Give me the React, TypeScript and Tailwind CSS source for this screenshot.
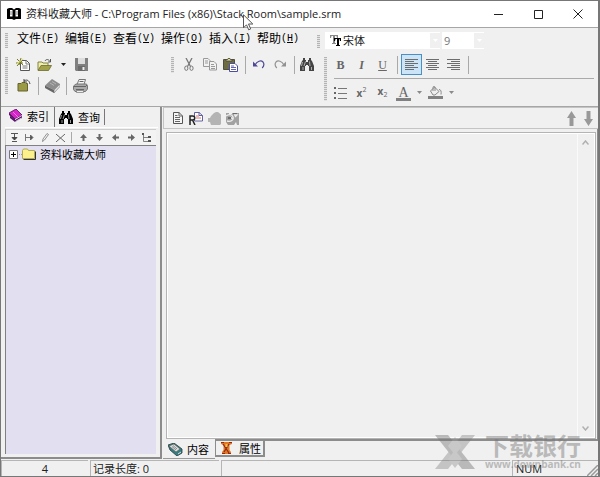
import React from 'react';

const Grip = ({ className = '' }: { className?: string }) => (
  <span className={`w-[3px] shrink-0 bg-[repeating-linear-gradient(to_bottom,#b4b4b4_0_1px,#e4e4e4_1px_2px)] ${className}`} />
);

const Sep = () => <span className="h-[18px] w-px shrink-0 bg-[#a9a9a9]" />;

const ToolButton = ({ label, active, className = '', children }: { label: string, active?: boolean, className?: string, children: React.ReactNode }) => (
  <button
    type="button"
    aria-label={label}
    className={`flex h-[21px] w-[21px] shrink-0 items-center justify-center ${active ? 'border border-[#4a90c4] bg-[#cce4f7]' : ''} ${className}`}
  >
    {children}
  </button>
);

const Caret = ({ color = '#8a8a8a' }: { color?: string }) => (
  <svg width="5" height="3" viewBox="0 0 5 3"><path d="M0 0h5L2.500 3z" fill={color} /></svg>
);

const NewIcon = () => (
  <svg width="15" height="15" viewBox="0 0 15 15">
    <path d="M5.500 3.500h5l3 3v7h-9V7z" fill="#fff" stroke="#555" />
    <path d="M10 3.500V7h3.500M6.500 9h5M6.500 11h5" fill="none" stroke="#777" />
    <path d="M1 2l6 6M0 6h7M5 1L3 8M1 9l6-7" stroke="#77791f" />
    <path d="M1 7l6-5" stroke="#eceb7d" />
  </svg>
);

const OpenIcon = () => (
  <svg width="15" height="14" viewBox="0 0 15 14">
    <path d="M1 12V4h4l1 1h5v3" fill="#efeeb0" stroke="#84843c" />
    <path d="M1 12.500l3-5h10.500l-3 5z" fill="#a3a24a" stroke="#6c6b2c" strokeWidth=".8" />
    <path d="M8 3c1-2 3.500-2 5 .5M13.500 1v3H11" fill="none" stroke="#555" />
  </svg>
);

const SaveIcon = () => (
  <svg width="13" height="13" viewBox="0 0 13 13">
    <path d="M0 0h13v13H1l-1-1z" fill="#808080" />
    <path d="M3 0h7v6H3z" fill="#dedede" />
    <path d="M3 8h7v5H3z" fill="#6b6b6b" />
    <path d="M7.500 9h2v3h-2z" fill="#eee" />
  </svg>
);

const CloseFolderIcon = () => (
  <svg width="14" height="13" viewBox="0 0 14 13">
    <path d="M1 12V4.500h3l1-1h3l1 1h1.500V12z" fill="#9b9a44" stroke="#64632c" />
    <path d="M7 2c2-1.500 5-1.500 6 3M7 0v3h3" fill="none" stroke="#444" />
  </svg>
);

const BookIcon = () => (
  <svg width="15" height="14" viewBox="0 0 15 14">
    <path d="M0 6.500L7 0l8 5-6 6z" fill="#8d8d8d" />
    <path d="M0 6.500v2.500l9 5v-3z" fill="#666" />
    <path d="M9 11l6-6v2.500L9 14z" fill="#ddd" stroke="#777" strokeWidth=".6" />
    <path d="M5 4l4 2.500M7 2.500l4 2.500" stroke="#b5b5b5" />
  </svg>
);

const PrintIcon = () => (
  <svg width="15" height="14" viewBox="0 0 15 14">
    <path d="M4 5.500L6 .5h6.500L11 5.500" fill="#f5f5f5" stroke="#777" />
    <path d="M.5 7l2.500-2h10.500l1 2v3l-2 2.500H2l-1.500-2z" fill="#aaa" stroke="#777" />
    <path d="M1 7.500h11M3 10.500h8M6.500 2.500h4M12 8l2-2" stroke="#666" />
    <path d="M3.500 11.500h7v2h-7z" fill="#eee" stroke="#777" strokeWidth=".7" />
  </svg>
);

const CutIcon = () => (
  <svg width="10" height="13" viewBox="0 0 10 13" fill="none" stroke="#777">
    <path d="M2 0l4.500 8.500M8 0L3.500 8.500" strokeWidth="1.300" />
    <ellipse cx="2.300" cy="10.200" rx="1.600" ry="2.200" />
    <ellipse cx="7.500" cy="10.200" rx="1.600" ry="2.200" />
  </svg>
);

const CopyIcon = () => (
  <svg width="14" height="13" viewBox="0 0 14 13" fill="#f2f2f2" stroke="#999">
    <path d="M.5.500H5l2 2v6H.500z" />
    <path d="M6.500 3.500h4.500l2.500 2.500v6h-7z" />
    <path d="M2 3h3M2 5h3M8 6.500h3M8 8.500h4M8 10.500h4" />
  </svg>
);

const PasteIcon = () => (
  <svg width="15" height="14" viewBox="0 0 15 14">
    <path d="M.5 1.500h11v10H.500z" fill="#6d6b40" stroke="#504f3a" />
    <path d="M3 3V1.500h1.500L5 .5h2l.5 1H9V3z" fill="#dedb88" stroke="#444" strokeWidth=".8" />
    <path d="M6.500 5.500H12l2.500 2.500v5.500h-8z" fill="#fff" stroke="#4d4da2" />
    <path d="M8 8h3M8 9.500h5M8 11.500h5" stroke="#6262ae" />
  </svg>
);

const UndoIcon = ({ color, flip }: { color: string, flip?: boolean }) => (
  <svg width="12" height="9" viewBox="0 0 12 9" className={flip ? '-scale-x-100' : ''}>
    <path d="M0 1.500V6.500h5z" fill={color} />
    <path d="M2 5C4 1 8 0 10 2c1.500 2 1 4-.8 6" fill="none" stroke={color} strokeWidth="1.200" />
  </svg>
);

const BinocularsIcon = ({ color }: { color: string }) => (
  <svg width="14" height="13" viewBox="0 0 14 13">
    <path d="M3 0h2v2h1v2h2V2h1V0h2v2l1 1 2 5v5H9V8H8V7H6v1H5v5H0V8l2-5 1-1z" fill={color} />
    <path d="M2.500 4L1.500 8M5.500 3.500L4 8M9.500 3.500L10 8M3 9v3M11.500 9v3" stroke="#ddd" strokeWidth=".7" />
  </svg>
);

const AlignIcon = ({ kind }: { kind: 'left' | 'center' | 'right' }) => {
  const short = { left: 'M0 2.500h9M0 6.500h9M0 10.500h9', center: 'M2 2.500h9M2 6.500h9M2 10.500h9', right: 'M4 2.500h9M4 6.500h9M4 10.500h9' };
  return (
    <svg width="13" height="12" viewBox="0 0 13 12" stroke="#6d6d6d">
      <path d="M0 .5h13M0 4.500h13M0 8.500h13" />
      <path d={short[kind]} />
    </svg>
  );
};

const ListIcon = () => (
  <svg width="13" height="12" viewBox="0 0 13 12">
    <path d="M0 0h2v2H0zM0 5h2v2H0zM0 10h2v2H0z" fill="#666" />
    <path d="M4 1.500h9M4 6.500h9M4 11.500h9" stroke="#777" />
  </svg>
);

const BucketIcon = () => (
  <svg width="15" height="13" viewBox="0 0 15 13">
    <path d="M2.500 5l4-4 4.500 4.500-4 3.500H5z" fill="#eee" stroke="#888" />
    <path d="M5 5V1.500C5 0 7 0 7 1.500V5M11 3.500c2 0 2.500 2 2 5" fill="none" stroke="#888" />
    <path d="M0 10h15v3H0z" fill="#808080" />
  </svg>
);

const SmallArrow = ({ rotate = '' }: { rotate?: string }) => (
  <svg width="7" height="7" viewBox="0 0 7 7" className={rotate}>
    <path d="M3.500 0L7 4H4.500v3h-2V4H0z" fill="#666" />
  </svg>
);

const BigArrow = ({ rotate = '' }: { rotate?: string }) => (
  <svg width="9" height="15" viewBox="0 0 9 15" className={rotate}>
    <path d="M4.500 0L9 7H6.500v8h-4V7H0z" fill="#999" />
  </svg>
);

const DocIcon = () => (
  <svg width="10" height="12" viewBox="0 0 10 12">
    <path d="M.5.500H6l3.500 3.500v7.500h-9z" fill="#f6f6f6" stroke="#555" />
    <path d="M6 0v4h3.500M2 3.500h2.500M2 5.500h5M2 7.500h5M2 9.500h5" fill="none" stroke="#666" />
  </svg>
);

const menus = [
  ['文件', 'F'],
  ['编辑', 'E'],
  ['查看', 'V'],
  ['操作', 'O'],
  ['插入', 'I'],
  ['帮助', 'H'],
];

const TitleBar = () => (
  <header className="flex h-[26px] items-center bg-white pl-[6px] text-[#222]">
    <svg width="14" height="12" viewBox="0 0 14 12">
      <path d="M0 1l2-1h3l2 1.500L9 0h3l2 1v10H9l-2 1-2-1H0z" fill="#000" />
      <path d="M3 2h2.500v6.500H3zM8.500 2H11v6.500H8.500z" fill="#fff" />
      <path d="M4 3v4M10 3v4" stroke="#333" strokeWidth=".6" />
    </svg>
    <h1 className="ml-[5px] flex-1 whitespace-pre text-[11px]">
      资料收藏大师 - C:\Program Files (x86)\Stack Room\sample.srm
    </h1>
    <div className="flex">
      <button type="button" aria-label="最小化" className="flex h-[26px] w-[40px] items-center justify-center">
        <svg width="9" height="1"><path d="M0 .5h9" stroke="#222" /></svg>
      </button>
      <button type="button" aria-label="最大化" className="flex h-[26px] w-[40px] items-center justify-center">
        <svg width="9" height="9"><path d="M.5.500h8v8h-8z" fill="none" stroke="#222" /></svg>
      </button>
      <button type="button" aria-label="关闭" className="flex h-[26px] w-[40px] items-center justify-center">
        <svg width="10" height="10"><path d="M.5.500l9 9M9.500.500l-9 9" stroke="#222" /></svg>
      </button>
    </div>
  </header>
);

const MenuRow = () => (
  <div className="flex h-[25px]">
    <div className="flex w-[312px] shrink-0 items-start pt-[2px]">
      <Grip className="ml-[4px] mt-[3px] h-[15px]" />
      <nav className="ml-[9px] flex h-[18px] items-center gap-[6px]">
        {menus.map(([name, key]) => (
          <button key={key} type="button" className="flex w-[42px] items-center whitespace-nowrap text-[12px] leading-[18px]">
            {name}
            <span className="font-['Liberation_Mono',monospace] text-[10px]">(<u>{key}</u>)</span>
          </button>
        ))}
      </nav>
    </div>
    <div className="flex items-start gap-[2px] pt-[4px]">
      <Grip className="ml-[4px] mr-[3px] mt-[3px] h-[13px]" />
      <label className="flex h-[17px] w-[115px] items-center bg-white pl-[5px]">
        <svg width="11" height="11" viewBox="0 0 11 11" aria-hidden="true">
          <path d="M0 0h8v3H7L6.500 1H5v7h1v1H2V8h1V1H1.500L1 3H0z" fill="#888" />
          <path d="M4 3h7v3h-1l-.5-2H9v6h1v1H6v-1h1V4H5.500L5 6H4z" fill="#000" />
        </svg>
        <select aria-label="字体" className="h-[17px] min-w-0 flex-1 appearance-none bg-transparent pl-[2px] text-[11px] leading-[17px] text-[#222]">
          <option>宋体</option>
        </select>
        <span className="flex h-[15px] w-[10px] items-center justify-center bg-[#f0f0f0]"><Caret color="#fff" /></span>
      </label>
      <label className="flex h-[17px] w-[42px] items-center bg-white pl-[2px]">
        <select aria-label="字号" className="h-[17px] min-w-0 flex-1 appearance-none bg-transparent text-[11px] leading-[17px] text-[#777]">
          <option>9</option>
        </select>
        <span className="flex h-[15px] w-[10px] items-center justify-center bg-[#f0f0f0]"><Caret color="#fff" /></span>
      </label>
    </div>
  </div>
);

const ToolRow = () => (
  <div className="flex pt-[1px]">
    <div className="flex w-[168px] shrink-0">
      <Grip className="ml-[4px] mt-[3px] h-[37px]" />
      <div className="ml-[5px]">
        <div className="flex items-center">
          <ToolButton label="新建"><NewIcon /></ToolButton>
          <ToolButton label="打开"><OpenIcon /></ToolButton>
          <button type="button" aria-label="最近文件" className="flex h-[21px] w-[16px] items-center justify-center"><Caret color="#222" /></button>
          <ToolButton label="保存"><SaveIcon /></ToolButton>
        </div>
        <div className="flex items-center">
          <ToolButton label="关闭文件"><CloseFolderIcon /></ToolButton>
          <span className="ml-[4px] mr-[3px] flex"><Sep /></span>
          <ToolButton label="资料"><BookIcon /></ToolButton>
          <span className="ml-[3px] mr-[3px] flex"><Sep /></span>
          <ToolButton label="打印"><PrintIcon /></ToolButton>
        </div>
      </div>
    </div>
    <div className="flex w-[154px] shrink-0">
      <Grip className="ml-[2px] mt-[3px] h-[16px]" />
      <div className="ml-[4px] flex h-[21px] items-center">
        <ToolButton label="剪切"><CutIcon /></ToolButton>
        <ToolButton label="复制"><CopyIcon /></ToolButton>
        <ToolButton label="粘贴"><PasteIcon /></ToolButton>
        <span className="ml-[4px] mr-[2px] flex"><Sep /></span>
        <ToolButton label="撤销"><UndoIcon color="#4a4a96" /></ToolButton>
        <ToolButton label="重做"><UndoIcon color="#929292" flip /></ToolButton>
        <span className="ml-[4px] mr-[1px] flex"><Sep /></span>
        <ToolButton label="查找"><BinocularsIcon color="#444" /></ToolButton>
      </div>
    </div>
    <div className="flex min-w-0 flex-1 pr-[4px]">
      <Grip className="ml-[1px] mt-[3px] h-[44px]" />
      <div className="ml-[3px] flex-1 text-[#666]">
        <div className="flex h-[21px] items-center font-['Liberation_Serif',serif] text-[12px] leading-none">
          <ToolButton label="加粗"><b>B</b></ToolButton>
          <ToolButton label="倾斜"><b><i>I</i></b></ToolButton>
          <ToolButton label="下划线"><u>U</u></ToolButton>
          <span className="ml-[4px] mr-[3px] flex"><Sep /></span>
          <ToolButton label="左对齐" active><AlignIcon kind="left" /></ToolButton>
          <ToolButton label="居中"><AlignIcon kind="center" /></ToolButton>
          <ToolButton label="右对齐"><AlignIcon kind="right" /></ToolButton>
          <span className="ml-[4px] flex"><Sep /></span>
        </div>
        <div className="ml-[4px] mt-[3px] h-px bg-[#aaa]" />
        <div className="mt-[3px] flex h-[21px] items-center text-[10px] leading-none">
          <ToolButton label="项目符号"><ListIcon /></ToolButton>
          <ToolButton label="上标"><b className="flex">x<span className="-mt-[2px] text-[7px] font-normal">2</span></b></ToolButton>
          <ToolButton label="下标"><b className="-mt-[4px] flex items-end">x<span className="-mb-[2px] text-[7px] font-normal">2</span></b></ToolButton>
          <ToolButton label="文字颜色">
            <span className="mt-[3px] w-[15px] border-b-[3px] border-[#808080] font-['Liberation_Serif',serif] text-[14px] leading-[11px]">A</span>
          </ToolButton>
          <button type="button" aria-label="选择文字颜色" className="flex h-[21px] w-[11px] items-center justify-center"><Caret /></button>
          <ToolButton label="填充颜色"><BucketIcon /></ToolButton>
          <button type="button" aria-label="选择填充颜色" className="flex h-[21px] w-[11px] items-center justify-center"><Caret /></button>
        </div>
      </div>
    </div>
  </div>
);

const IndexPane = () => (
  <section className="flex w-[161px] shrink-0 flex-col border-b-2 border-r-2 border-[#8c8c8c] pl-[4px] pr-[4px] pb-[3px]">
    <div className="flex h-[20px] text-[11px] leading-none">
      <button type="button" className="flex w-[50px] items-center gap-[5px] border-r border-[#777] pb-[2px] pl-[4px]">
        <svg width="13" height="14" viewBox="0 0 13 14">
          <path d="M0 4l7-4 6 6-7 4z" fill="#d526c8" stroke="#4b1150" strokeWidth=".8" />
          <path d="M0 4v2l6 5v-1.500zM1 7v2l5 4 7-4V6l-7 5z" fill="#5b146b" />
          <path d="M6 10.500L13 6.500M6.500 12.500L12.500 9" stroke="#eee" strokeWidth=".8" />
          <path d="M4 3l5 5" stroke="#f783ed" strokeWidth=".8" />
        </svg>
        索引
      </button>
      <button type="button" className="mt-[2px] flex h-[16px] w-[50px] items-center gap-[5px] border-r border-[#777] pl-[4px]">
        <BinocularsIcon color="#000" />
        查询
      </button>
    </div>
    <div className="-mr-[2px] h-[2px] border-t border-white" />
    <div className="flex h-[16px] items-center border-l border-t border-[#ccc] bg-[#f3f3f3] pl-px">
      <button type="button" aria-label="添加" className="flex h-[15px] w-[15px] items-center justify-center">
        <svg width="7" height="9" viewBox="0 0 7 9"><path d="M0 .5h7M3.500 1v6M1 8.500h5M1 4.500L3.500 7 6 4.500z" fill="#444" stroke="#444" strokeWidth=".9" /></svg>
      </button>
      <button type="button" aria-label="添加下级" className="flex h-[15px] w-[15px] items-center justify-center">
        <svg width="9" height="7" viewBox="0 0 9 7"><path d="M.5 0v7M1 3.500h6M5.500 1L8 3.500 5.500 6z" fill="#555" stroke="#555" strokeWidth=".8" /></svg>
      </button>
      <button type="button" aria-label="编辑" className="flex h-[15px] w-[16px] items-center justify-center">
        <svg width="7" height="9" viewBox="0 0 7 9"><path d="M.5 8.500L1 6l4-5.500 1.500 1-4 5.500z" fill="#f6f6f6" stroke="#777" strokeWidth=".8" /></svg>
      </button>
      <button type="button" aria-label="删除" className="flex h-[15px] w-[15px] items-center justify-center">
        <svg width="9" height="8" viewBox="0 0 9 8"><path d="M0 0l9 8M9 0L0 8" stroke="#666" /></svg>
      </button>
      <span className="ml-[3px] mr-[3px] h-[11px] w-px bg-[#aaa]" />
      <button type="button" aria-label="上移" className="flex h-[15px] w-[16px] items-center justify-center"><SmallArrow /></button>
      <button type="button" aria-label="下移" className="flex h-[15px] w-[16px] items-center justify-center"><SmallArrow rotate="rotate-180" /></button>
      <button type="button" aria-label="左移" className="flex h-[15px] w-[16px] items-center justify-center"><SmallArrow rotate="-rotate-90" /></button>
      <button type="button" aria-label="右移" className="flex h-[15px] w-[16px] items-center justify-center"><SmallArrow rotate="rotate-90" /></button>
      <button type="button" aria-label="展开" className="flex h-[15px] w-[15px] items-center justify-center">
        <svg width="9" height="9" viewBox="0 0 9 9"><path d="M0 0h2v2H0zM6 3h3v2H6zM6 7h3v2H6z" fill="#555" /><path d="M1.500 2v6.500H6M1.500 4.500H6" fill="none" stroke="#666" strokeWidth=".8" /></svg>
      </button>
    </div>
    <div className="flex-1 border-l border-t border-[#808080] bg-[#e2dff0]">
      <button type="button" className="flex h-[16px] items-center pl-[3px] text-[11px] leading-none">
        <svg width="13" height="9" viewBox="0 0 13 9">
          <path d="M.5.500h8v8h-8z" fill="#fff" stroke="#777" />
          <path d="M2 4.500h5M4.500 2v5" stroke="#000" />
          <path d="M10 4.500h1M12 4.500h1" stroke="#999" />
        </svg>
        <svg width="14" height="12" viewBox="0 0 14 12">
          <path d="M1.500 11.500h12v-8" fill="none" stroke="#333" />
          <path d="M.5 10.500v-8l1-1.500h4l1 1.500H12.500v8z" fill="#fbf08b" stroke="#a29a3e" strokeWidth=".8" />
        </svg>
        <span className="ml-[4px]">资料收藏大师</span>
      </button>
    </div>
  </section>
);

const ContentPane = () => (
  <section className="ml-[1px] flex min-w-0 flex-1 flex-col">
    <div className="flex h-[22px] items-center border-b border-l border-t border-[#c4c4c4] pl-[5px] pr-[1px]">
      <button type="button" aria-label="文本" className="flex w-[18px] justify-center"><DocIcon /></button>
      <button type="button" aria-label="超文本" className="flex w-[18px] justify-center">
        <svg width="14" height="13" viewBox="0 0 14 13">
          <path d="M5.500.500H10l3.500 3v5.500h-8z" fill="#fff" stroke="#6262a0" />
          <path d="M10 0v3.500h3.500" fill="none" stroke="#6262a0" />
          <path d="M7 4h3M7 6h5" stroke="#d27878" />
          <path d="M1 13V4h2.500C6.500 4 6.500 8 3.500 8H1M3.500 8L6 13" fill="none" stroke="#222" strokeWidth="1.500" />
        </svg>
      </button>
      <button type="button" aria-label="图片" className="flex w-[18px] justify-center">
        <svg width="13" height="13" viewBox="0 0 13 13"><path d="M3 4l3-3 2-1h2l3 2.500V12l-1 1H3l-1-3H0V6h2z" fill="#b4b4b4" /></svg>
      </button>
      <button type="button" aria-label="网页" className="flex w-[18px] justify-center">
        <svg width="13" height="13" viewBox="0 0 13 13">
          <path d="M0 1h3v1h3V1h7v12h-2l-1-3-2 3H2l-2-3z" fill="#a2a2a2" />
          <path d="M0 4c3-2 6-2 7 1s-2 5-6 4M4 5l3 2M8 3h3l-2 2" fill="none" stroke="#ececec" strokeWidth="1.300" />
          <path d="M2 5h3v2H2zM7 1h4v1H7z" fill="#6d6d6d" />
        </svg>
      </button>
      <span className="flex-1" />
      <button type="button" aria-label="上一条" className="flex w-[17px] justify-center"><BigArrow /></button>
      <button type="button" aria-label="下一条" className="flex w-[17px] justify-center"><BigArrow rotate="rotate-180" /></button>
    </div>
    <div className="flex flex-1 flex-col border-b-2 border-r border-[#8c8c8c] pl-[3px] pr-[1px] pt-[3px]">
      <div className="flex flex-1 border border-[#b4b4b4]">
        <div className="flex flex-1 justify-end border border-white">
          <div className="mr-[2px] flex w-[15px] flex-col items-center justify-between border-l border-[#fafafa] py-[6px]">
            <svg width="7" height="5" viewBox="0 0 7 5"><path d="M.5 4.500l3-3.500 3 3.500" fill="none" stroke="#b0b0b0" strokeWidth="1.500" /></svg>
            <svg width="7" height="5" viewBox="0 0 7 5"><path d="M.5.500l3 3.500 3-3.500" fill="none" stroke="#b0b0b0" strokeWidth="1.500" /></svg>
          </div>
        </div>
      </div>
    </div>
    <div className="flex h-[18px] text-[11px] leading-none">
      <button type="button" className="-mt-[2px] flex h-[20px] w-[52px] items-center gap-[4px] border-b border-[#999] bg-[#f0f0f0] pl-[5px] pt-[2px]">
        <svg width="15" height="13" viewBox="0 0 15 13">
          <path d="M0 2l6-2 8 6v4l-5 3-7-6z" fill="#367c80" stroke="#253b3d" strokeWidth=".8" />
          <path d="M1 3l5-2 6 5-4 3z" fill="#ddd" stroke="#555" strokeWidth=".6" />
          <path d="M4 3.500l4 3.500M5 2.500l4 3.500" stroke="#666" strokeWidth=".7" />
          <path d="M10 11l3-2" stroke="#ddd" />
        </svg>
        内容
      </button>
      <button type="button" className="flex h-[16px] w-[50px] items-center gap-[7px] border-b-2 border-l border-r-2 border-[#8c8c8c] pl-[5px]">
        <svg width="11" height="12" viewBox="0 0 11 12">
          <path d="M0 0h11v2L8.500 3v5l1.500 2v2H1v-2l1.500-2V3L0 2z" fill="#df7724" />
          <path d="M0 .5h3M8 .5h3M2 2l6 9M8 2L3 10M1 11.500h3M7 11.500h3" stroke="#922914" strokeWidth="1.200" />
          <path d="M4.500 2h2v3h-2z" fill="#f5be4a" />
        </svg>
        属性
      </button>
    </div>
  </section>
);

const StatusBar = () => (
  <footer className="flex h-[17px] gap-[2px] pt-[1px] text-[11px] leading-[15px] text-[#222]">
    <span className="w-[87px] border-l border-t border-[#b5b5b5] text-center">4</span>
    <span className="w-[129px] border-l border-t border-[#b5b5b5] pl-[2px]">记录长度: 0</span>
    <span className="flex-1 border-l border-t border-[#b5b5b5]" />
    <span className="flex w-[86px] justify-between border-l border-t border-[#b5b5b5] pl-[3px]">
      NUM
      <svg width="11" height="11" viewBox="0 0 11 11" className="self-end"><path d="M0 11L11 0M4 11l7-7M8 11l3-3" stroke="#999" strokeWidth="1.500" /></svg>
    </span>
  </footer>
);

const Watermark = () => (
  <div className="pointer-events-none absolute bottom-[7px] right-[15px] flex items-center gap-[9px] text-[#777] opacity-45">
    <svg width="41" height="34" viewBox="0 0 41 34">
      <path d="M0 0h13l27 34H27z" fill="#777" />
      <path d="M27 0h13L13 34H0z" fill="#777" fillOpacity=".8" />
      <path d="M20 2l7 9-7 9-7-9zM20 15l7 9-7 9-7-9z" fill="#999" />
    </svg>
    <div className="w-[98px]">
      <div className="text-[24px] font-bold leading-[22px]">下载银行</div>
      <div className="mt-[2px] text-[10px] font-bold leading-[10px]">www.downbank.cn</div>
    </div>
  </div>
);

const App = () => (
  <div className="relative flex min-h-screen select-none flex-col border border-r-2 border-[#777] bg-[#f0f0f0] font-['Open_Sans','Noto_Sans_CJK_SC',sans-serif] text-black">
    <TitleBar />
    <div className="h-[80px] border-b border-t border-[#a6a6a6]">
      <MenuRow />
      <ToolRow />
    </div>
    <main className="flex flex-1">
      <IndexPane />
      <ContentPane />
    </main>
    <StatusBar />
    <Watermark />
    <svg width="11" height="17" viewBox="0 0 11 17" className="pointer-events-none absolute left-[242px] top-[13px]">
      <path d="M.5.800v13l3-3 2.200 5 2-.9-2.200-4.900h4.300z" fill="#fff" stroke="#555" />
    </svg>
  </div>
);

export default App;
